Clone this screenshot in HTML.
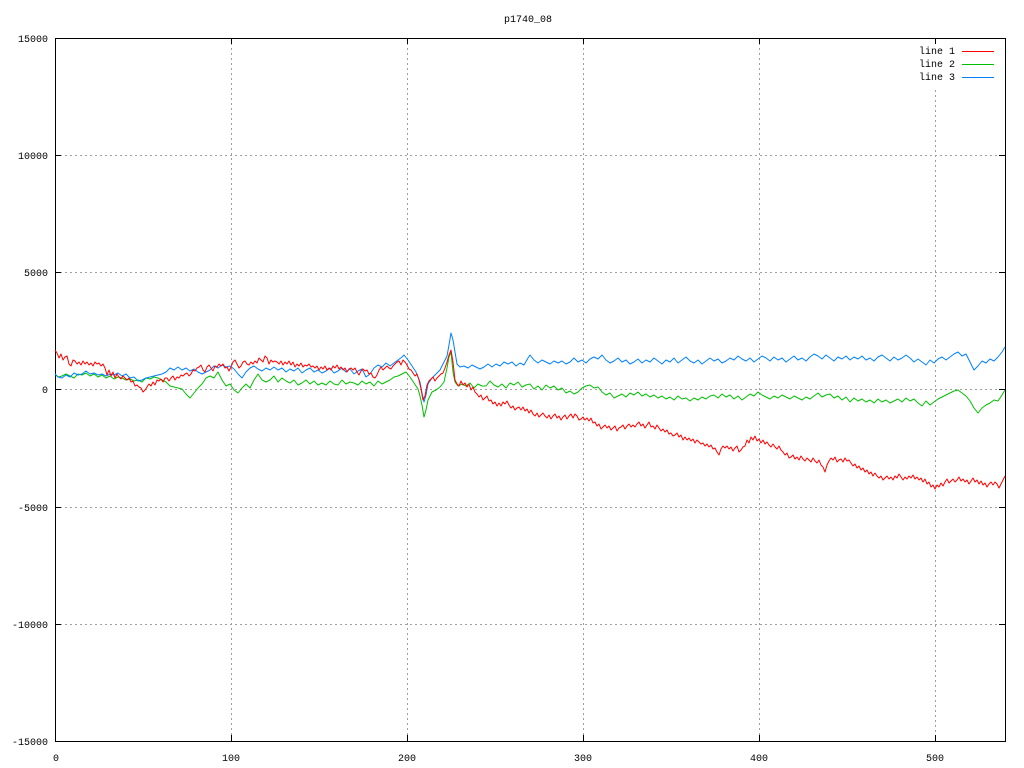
<!DOCTYPE html>
<html><head><meta charset="utf-8"><style>
html,body{margin:0;padding:0;background:#fff;}
svg{display:block;}
text{font-family:"Liberation Mono","DejaVu Sans Mono",monospace;font-size:10px;fill:#000;}
</style></head><body>
<svg width="1024" height="768" viewBox="0 0 1024 768" xmlns="http://www.w3.org/2000/svg">
<rect width="1024" height="768" fill="#fff"/>
<g stroke="#a0a0a0" stroke-width="1" stroke-dasharray="2,3" fill="none">
<line x1="231.5" y1="38" x2="231.5" y2="741"/>
<line x1="407.5" y1="38" x2="407.5" y2="741"/>
<line x1="583.5" y1="38" x2="583.5" y2="741"/>
<line x1="759.5" y1="38" x2="759.5" y2="741"/>
<line x1="935.5" y1="90" x2="935.5" y2="741"/>
<line x1="55" y1="155.5" x2="1005" y2="155.5"/>
<line x1="55" y1="272.5" x2="1005" y2="272.5"/>
<line x1="55" y1="389.5" x2="1005" y2="389.5"/>
<line x1="55" y1="507.5" x2="1005" y2="507.5"/>
<line x1="55" y1="624.5" x2="1005" y2="624.5"/>
</g>
<g stroke="#000" stroke-width="1" fill="none">
<rect x="55.5" y="38.5" width="950" height="703"/>
<path d="M55 155.5h6M55 272.5h6M55 389.5h6M55 507.5h6M55 624.5h6M1005 155.5h-6M1005 272.5h-6M1005 389.5h-6M1005 507.5h-6M1005 624.5h-6M231.5 741v-6M407.5 741v-6M583.5 741v-6M759.5 741v-6M935.5 741v-6M231.5 38v6M407.5 38v6M583.5 38v6M759.5 38v6M935.5 38v6"/>
</g>
<text x="528" y="22" text-anchor="middle">p1740_08</text>
<g text-anchor="end">
<text x="48" y="42">15000</text>
<text x="48" y="159">10000</text>
<text x="48" y="276">5000</text>
<text x="48" y="393">0</text>
<text x="48" y="511">-5000</text>
<text x="48" y="628">-10000</text>
<text x="48" y="745">-15000</text>
</g>
<g text-anchor="middle">
<text x="56" y="761">0</text>
<text x="231" y="761">100</text>
<text x="407" y="761">200</text>
<text x="583" y="761">300</text>
<text x="759" y="761">400</text>
<text x="935" y="761">500</text>
</g>
<g text-anchor="end">
<text x="955" y="54">line 1</text>
<text x="955" y="67">line 2</text>
<text x="955" y="80">line 3</text>
</g>
<line x1="962" y1="51.5" x2="994" y2="51.5" stroke="#ff0000"/>
<line x1="962" y1="64.5" x2="994" y2="64.5" stroke="#00c000"/>
<line x1="962" y1="77.5" x2="994" y2="77.5" stroke="#0080ff"/>
<g fill="none" stroke-width="1" stroke-linejoin="round">
<polyline stroke="#00c000" points="55,374 58,377 62,376 66,374 70,376 74,378 78,374 82,375 86,373 90,376 94,374 98,377 102,375 106,378 110,376 114,379 118,377 122,378 126,380 130,379 134,381 138,380 142,382 146,378 150,379 154,377 158,378 162,380 166,382 170,386 174,387 178,388 182,389 186,394 190,398 194,393 198,388 202,384 206,378 210,376 214,378 218,372 222,380 226,386 230,384 234,390 238,393 242,388 246,384 250,388 254,380 258,374 262,380 266,382 270,380 274,376 278,382 282,378 286,381 290,383 294,380 298,385 302,383 306,380 310,384 314,381 318,385 322,383 326,385 330,381 334,384 338,385 342,380 346,384 350,382 354,383 358,385 362,381 366,384 370,382 374,386 378,381 382,384 386,382 390,380 394,377 398,376 402,374 406,372 410,377 414,383 418,389 420,396 422,405 424,417 426,410 428,400 432,392 436,390 440,387 444,382 447,368 449,357 451,352 453,372 455,382 458,386 462,384 466,386 470,383 474,388 478,384 482,386 486,386 490,381 494,385 498,387 502,384 506,388 510,383 514,385 518,382 522,387 526,385 530,384 534,389 538,386 542,390 546,385 550,388 554,386 558,390 562,388 566,393 570,391 574,394 578,392 582,388 586,386 590,385 594,388 598,387 602,392 606,395 610,393 614,398 618,396 622,394 626,397 630,393 634,395 638,392 642,396 646,394 650,397 654,395 658,398 662,396 666,399 670,397 674,400 678,396 682,399 686,398 690,401 694,398 698,400 702,397 706,399 710,396 714,395 718,398 722,394 726,397 730,395 734,399 738,396 742,400 746,397 750,394 754,396 758,392 762,395 766,397 770,399 774,396 778,398 782,395 786,397 790,399 794,396 798,398 802,400 806,397 810,399 814,396 818,393 822,397 826,395 830,394 834,398 838,396 842,400 846,397 850,402 854,398 858,401 862,399 866,402 870,400 874,403 878,399 882,402 886,400 890,403 894,401 898,399 902,402 906,398 910,401 914,399 918,403 922,406 926,401 930,405 934,402 938,399 942,397 946,395 950,393 954,391 958,390 962,393 966,396 970,401 974,408 978,413 982,408 986,405 990,403 994,400 998,401 1002,395 1005,390"/>
<polyline stroke="#0080ff" points="55,374 58,377 62,378 66,375 70,377 74,373 78,375 82,374 86,371 90,374 94,373 98,375 102,374 106,376 110,374 114,375 118,373 122,376 126,374 130,378 134,377 138,381 142,380 146,378 150,377 154,376 158,375 162,374 166,372 170,368 174,370 178,367 182,370 186,368 190,371 194,369 198,372 202,374 206,372 210,370 214,366 218,368 222,365 226,367 230,366 234,369 238,374 242,378 246,372 250,368 254,366 258,369 262,371 266,368 270,370 274,367 278,370 282,368 286,372 290,369 294,371 298,368 302,373 306,370 310,368 314,372 318,370 322,373 326,371 330,368 334,373 338,371 342,368 346,372 350,369 354,374 358,371 362,369 366,377 370,374 374,368 378,365 382,367 386,363 390,366 394,363 398,360 402,357 404,355 408,360 412,366 416,372 420,382 422,393 424,402 426,395 428,384 432,378 436,374 440,370 444,362 447,356 449,345 451,333 453,340 455,352 457,364 460,367 464,366 468,368 472,365 476,367 480,369 484,367 488,364 492,367 496,364 500,366 504,362 508,364 512,362 516,366 520,363 524,365 528,358 530,355 534,360 538,363 542,360 546,362 550,364 554,361 558,363 562,361 566,364 570,362 574,358 578,362 582,360 586,363 590,359 594,357 598,359 602,355 606,360 610,363 614,361 618,358 622,362 626,360 630,364 634,362 638,359 642,363 646,360 650,362 654,358 658,361 662,364 666,360 670,362 674,358 678,363 682,360 686,357 690,361 694,363 698,360 702,364 706,361 710,358 714,361 718,359 722,363 726,361 730,358 734,360 738,356 742,359 746,361 750,358 754,362 758,359 762,356 766,358 770,361 774,357 778,360 782,358 786,362 790,359 794,356 798,360 802,358 806,361 810,357 814,354 818,356 822,359 826,355 830,358 834,361 838,357 842,359 846,356 850,360 854,357 858,359 862,356 866,360 870,358 874,361 878,357 882,355 886,358 890,361 894,357 898,360 902,358 906,355 910,358 914,362 918,359 922,362 926,365 930,360 934,363 938,359 942,357 946,360 950,357 954,354 958,352 962,356 966,354 970,362 974,370 978,366 982,361 986,363 990,359 994,361 998,357 1002,352 1005,347"/>
<polyline stroke="#ff0000" points="55,350 57,353 59,358 61,354 63,360 65,357 67,356 69,364 71,366 73,360 75,361 77,364 79,362 81,365 83,361 85,364 87,362 89,365 91,363 93,366 95,362 97,364 99,363 101,366 103,364 105,368 107,375 109,370 111,376 113,372 115,378 117,374 119,377 121,379 123,376 125,378 127,380 129,378 131,382 133,381 135,386 137,385 139,387 141,388 143,392 145,390 147,387 149,384 151,386 153,382 155,385 157,380 159,381 161,379 163,382 165,378 167,378 169,381 171,378 173,376 175,380 177,377 179,378 181,375 183,376 185,374 187,373 189,376 191,374 193,370 195,371 197,368 199,367 201,365 203,370 205,372 207,367 209,365 211,368 213,371 215,366 217,367 219,364 221,366 223,364 225,368 227,367 229,371 231,367 233,362 235,360 237,364 239,368 241,366 243,362 245,361 247,364 249,365 251,362 253,364 255,361 257,363 259,358 261,360 263,362 265,356 267,358 269,364 271,360 273,362 275,361 277,362 279,364 281,361 283,365 285,362 287,364 289,361 291,365 293,362 295,367 297,364 299,366 301,363 303,367 305,365 307,366 309,364 311,367 313,366 315,368 317,366 319,370 321,367 323,369 325,366 327,370 329,368 331,370 333,366 335,368 337,365 339,369 341,367 343,370 345,368 347,372 349,369 351,368 353,370 355,368 357,372 359,375 361,371 363,369 365,371 367,370 369,374 371,373 373,377 375,378 377,375 379,370 381,367 383,370 385,368 387,366 389,368 391,369 393,366 395,364 397,362 399,361 401,365 403,360 405,362 407,365 409,369 411,370 413,373 415,376 417,374 419,380 421,389 423,400 425,396 427,385 429,381 431,379 433,377 435,381 437,378 439,376 441,374 443,373 445,368 447,362 449,355 451,350 453,362 455,380 457,384 459,386 461,381 463,385 465,383 467,387 469,384 471,390 473,387 475,392 477,394 479,397 481,395 483,400 485,398 487,396 489,401 491,400 493,404 495,402 497,406 499,403 501,406 503,402 505,404 507,401 509,405 511,408 513,406 515,410 517,408 519,407 521,410 523,407 525,411 527,409 529,413 531,410 533,414 535,416 537,413 539,417 541,415 543,413 545,416 547,418 549,415 551,419 553,416 555,414 557,418 559,416 561,420 563,417 565,415 567,419 569,416 571,414 573,418 575,414 577,416 579,420 581,419 583,417 585,420 587,418 589,421 591,418 593,423 595,422 597,426 599,424 601,429 603,427 605,425 607,428 609,426 611,430 613,428 615,426 617,431 619,428 621,427 623,425 625,429 627,426 629,424 631,427 633,425 635,427 637,424 639,422 641,426 643,424 645,428 647,425 649,422 651,427 653,426 655,429 657,425 659,428 661,431 663,429 665,432 667,430 669,434 671,433 673,436 675,435 677,433 679,437 681,435 683,440 685,437 687,440 689,438 691,441 693,439 695,443 697,440 699,442 701,444 703,443 705,446 707,444 709,447 711,445 713,449 715,448 717,452 719,455 721,449 723,446 725,448 727,446 729,449 731,447 733,451 735,448 737,446 739,452 741,450 743,447 745,446 747,440 749,443 751,437 753,440 755,436 757,441 759,439 761,443 763,440 765,444 767,442 769,445 771,447 773,444 775,447 777,449 779,446 781,450 783,452 785,455 787,453 789,458 791,457 793,455 795,459 797,457 799,460 801,456 803,459 805,461 807,458 809,460 811,462 813,458 815,461 817,463 819,460 821,465 823,467 825,472 827,465 829,461 831,458 833,460 835,457 837,462 839,460 841,459 843,462 845,458 847,461 849,460 851,463 853,466 855,464 857,468 859,466 861,470 863,468 865,472 867,470 869,474 871,472 873,476 875,473 877,476 879,478 881,476 883,480 885,478 887,476 889,479 891,477 893,480 895,476 897,478 899,474 901,477 903,480 905,477 907,479 909,476 911,478 913,475 915,479 917,477 919,480 921,478 923,482 925,479 927,484 929,482 931,487 933,485 935,489 937,485 939,487 941,483 943,486 945,482 947,479 949,483 951,481 953,479 955,482 957,480 959,477 961,481 963,479 965,482 967,480 969,484 971,481 973,478 975,482 977,480 979,484 981,481 983,485 985,483 987,487 989,484 991,482 993,485 995,482 997,484 999,488 1001,484 1003,480 1005,476"/>
</g>
</svg>
</body></html>
